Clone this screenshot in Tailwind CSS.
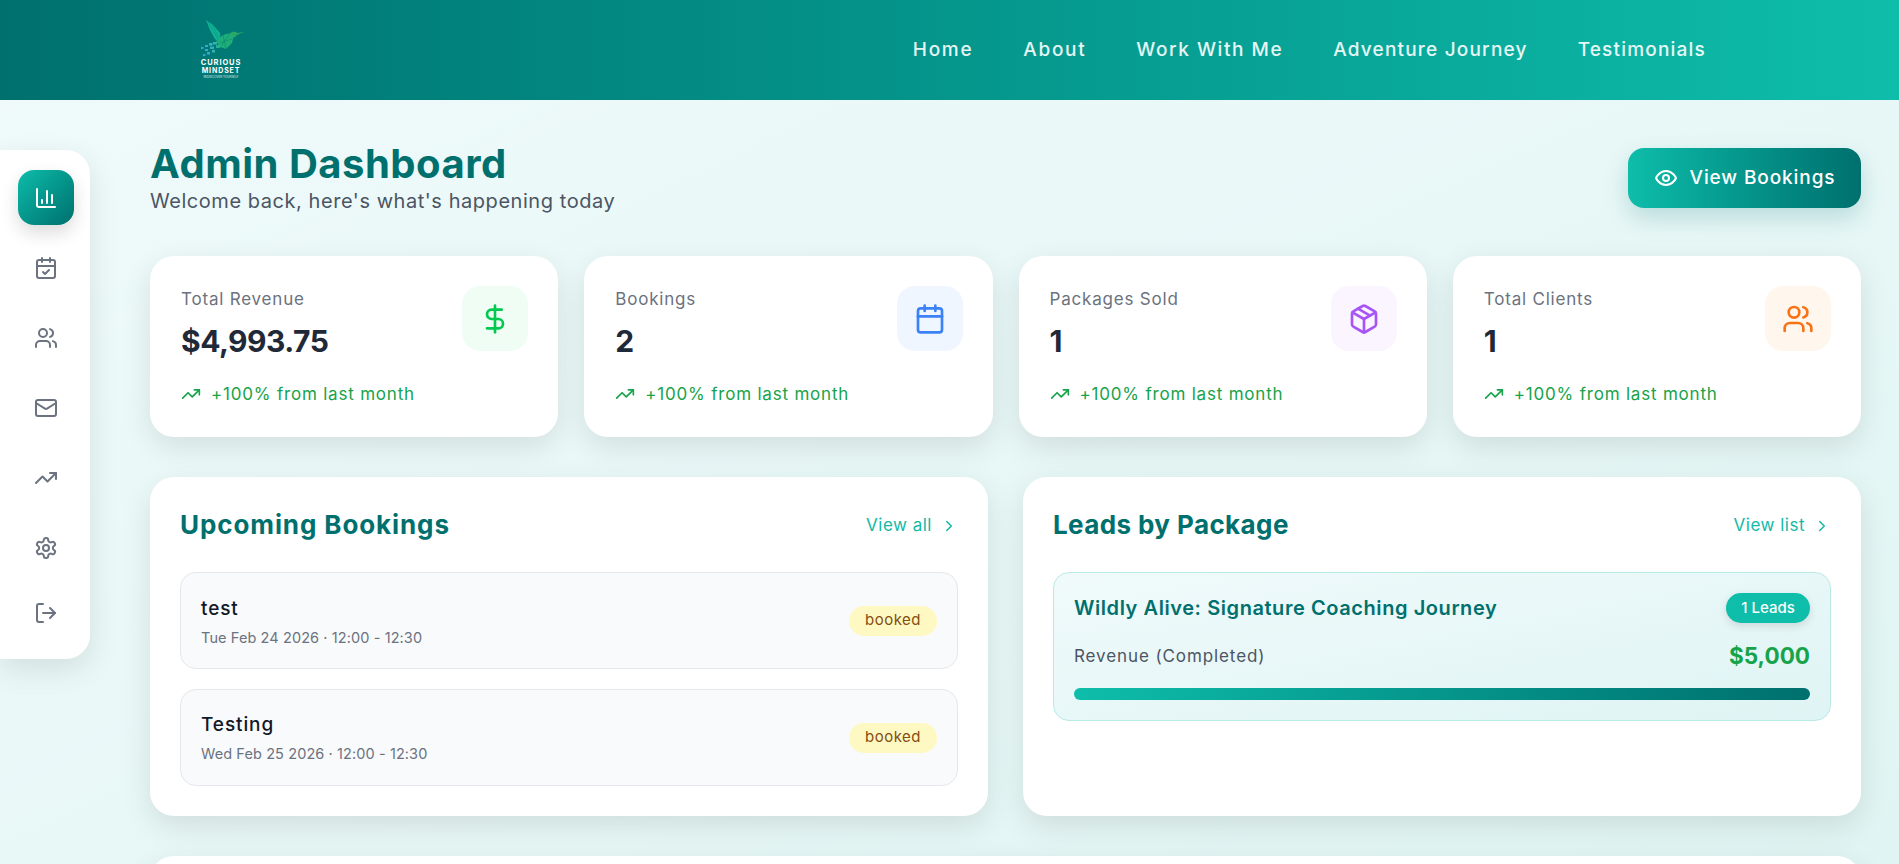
<!DOCTYPE html>
<html lang="en">
<head>
    <meta charset="UTF-8">
    <meta name="viewport" content="width=device-width, initial-scale=1.0">
    <title>Admin Dashboard</title>
    <script src="https://cdn.jsdelivr.net/npm/@tailwindcss/browser@4"></script>
</head>
<body class="h-screen overflow-hidden bg-gradient-to-br from-[#f0fafb] to-[#e0f5f3] font-['Inter',sans-serif] text-[#111827]">
    <header class="h-[100px] flex items-center justify-between pl-[196px] pr-[193px] bg-gradient-to-r from-[#00706e] to-[#0ebdaa]">
        <div class="w-[50px] flex flex-col items-center -mt-[4px]">
            <svg width="50" height="40" viewBox="0 0 50 40">
                <polygon points="10,3 17,8 24,16 25,26 19,22 14,13" fill="#0fb594"/>
                <path d="M12 5 L22 22 M16 8 L24 22" stroke="#0a8f7c" stroke-width="0.5"/>
                <polygon points="20,24 27,18 34,16 38,18 36,26 30,32 24,30" fill="#1fae7a"/>
                <path d="M27 18 L30 32 M34 16 L26 28 M36 22 L24 26" stroke="#0c7f6c" stroke-width="0.5"/>
                <polygon points="34,16 38,14.5 42,16 49,14.5 41,18 38,21" fill="#29a866"/>
                <rect x="17" y="25" width="4" height="2.5" fill="#2fb5a8"/>
                <rect x="13" y="26" width="3.5" height="2.5" fill="#35b3c4"/>
                <rect x="20" y="28" width="4" height="3" fill="#27ae9a"/>
                <rect x="9" y="28" width="3" height="2" fill="#3aa7cf"/>
                <rect x="14" y="29.5" width="4" height="2.5" fill="#33aebf"/>
                <rect x="5" y="30" width="2.5" height="2" fill="#3aa0d0"/>
                <rect x="9" y="32" width="3" height="2" fill="#3aa7cf"/>
                <rect x="16" y="33" width="3" height="2.5" fill="#2fb5b5"/>
                <rect x="11" y="35" width="3" height="2.5" fill="#38a8cc"/>
                <rect x="7" y="37" width="2.5" height="2" fill="#3aa0d0"/>
            </svg>
            <span class="text-[7.5px] leading-[9px] mt-[1px] font-bold text-white tracking-[0.9px]">CURIOUS</span>
            <span class="text-[7px] leading-[8px] font-bold text-white tracking-[0.9px]">MINDSET</span>
            <span class="text-[3px] leading-[4px] text-white/80">REDISCOVER YOURSELF</span>
        </div>
        <nav class="flex items-center gap-[50px] mt-[1px] text-[19px] font-medium text-white/90">
            <a href="#" class="tracking-[1.7px]">Home</a>
            <a href="#" class="tracking-[1.7px]">About</a>
            <a href="#" class="tracking-[1.55px]">Work With Me</a>
            <a href="#" class="tracking-[1.2px]">Adventure Journey</a>
            <a href="#" class="tracking-[1.2px]">Testimonials</a>
        </nav>
    </header>

    <div class="flex items-start">
        <aside class="w-[90px] h-[509px] mt-[50px] shrink-0 bg-white rounded-r-[24px] shadow-[0_10px_30px_rgba(0,0,0,0.1)] pt-[20px] pl-[18px] flex flex-col text-[#6b7280]">
            <a href="#" class="w-[56px] h-[55px] mb-[15px] flex items-center justify-center rounded-[16px] text-white bg-gradient-to-br from-[#0ebdaa] to-[#00706e] shadow-[0_8px_18px_rgba(0,0,0,0.14)]">
                <svg width="24" height="24" viewBox="0 0 24 24" fill="none" stroke="currentColor" stroke-width="2" stroke-linecap="round" stroke-linejoin="round"><path d="M3 3v16a2 2 0 0 0 2 2h16"/><path d="M18 17V9"/><path d="M13 17V5"/><path d="M8 17v-3"/></svg>
            </a>
            <a href="#" class="w-[56px] h-[56px] mb-[14px] flex items-center justify-center">
                <svg width="24" height="24" viewBox="0 0 24 24" fill="none" stroke="currentColor" stroke-width="2" stroke-linecap="round" stroke-linejoin="round"><path d="M8 2v4"/><path d="M16 2v4"/><rect x="3" y="4" width="18" height="18" rx="2"/><path d="M3 10h18"/><path d="m9 16 2 2 4-4"/></svg>
            </a>
            <a href="#" class="w-[56px] h-[56px] mb-[14px] flex items-center justify-center">
                <svg width="24" height="24" viewBox="0 0 24 24" fill="none" stroke="currentColor" stroke-width="2" stroke-linecap="round" stroke-linejoin="round"><path d="M16 21v-2a4 4 0 0 0-4-4H6a4 4 0 0 0-4 4v2"/><circle cx="9" cy="7" r="4"/><path d="M22 21v-2a4 4 0 0 0-3-3.87"/><path d="M16 3.13a4 4 0 0 1 0 7.75"/></svg>
            </a>
            <a href="#" class="w-[56px] h-[56px] mb-[14px] flex items-center justify-center">
                <svg width="24" height="24" viewBox="0 0 24 24" fill="none" stroke="currentColor" stroke-width="2" stroke-linecap="round" stroke-linejoin="round"><rect x="2" y="4" width="20" height="16" rx="2"/><path d="m22 7-8.97 5.7a1.94 1.94 0 0 1-2.06 0L2 7"/></svg>
            </a>
            <a href="#" class="w-[56px] h-[56px] mb-[14px] flex items-center justify-center">
                <svg width="24" height="24" viewBox="0 0 24 24" fill="none" stroke="currentColor" stroke-width="2" stroke-linecap="round" stroke-linejoin="round"><polyline points="22 7 13.5 15.5 8.5 10.5 2 17"/><polyline points="16 7 22 7 22 13"/></svg>
            </a>
            <a href="#" class="w-[56px] h-[56px] mb-[9px] flex items-center justify-center">
                <svg width="24" height="24" viewBox="0 0 24 24" fill="none" stroke="currentColor" stroke-width="2" stroke-linecap="round" stroke-linejoin="round"><path d="M12.22 2h-.44a2 2 0 0 0-2 2v.18a2 2 0 0 1-1 1.73l-.43.25a2 2 0 0 1-2 0l-.15-.08a2 2 0 0 0-2.73.73l-.22.38a2 2 0 0 0 .73 2.73l.15.1a2 2 0 0 1 1 1.72v.51a2 2 0 0 1-1 1.74l-.15.09a2 2 0 0 0-.73 2.73l.22.38a2 2 0 0 0 2.73.73l.15-.08a2 2 0 0 1 2 0l.43.25a2 2 0 0 1 1 1.73V20a2 2 0 0 0 2 2h.44a2 2 0 0 0 2-2v-.18a2 2 0 0 1 1-1.73l.43-.25a2 2 0 0 1 2 0l.15.08a2 2 0 0 0 2.73-.73l.22-.39a2 2 0 0 0-.73-2.73l-.15-.08a2 2 0 0 1-1-1.74v-.5a2 2 0 0 1 1-1.74l.15-.09a2 2 0 0 0 .73-2.73l-.22-.38a2 2 0 0 0-2.73-.73l-.15.08a2 2 0 0 1-2 0l-.43-.25a2 2 0 0 1-1-1.73V4a2 2 0 0 0-2-2z"/><circle cx="12" cy="12" r="3"/></svg>
            </a>
            <a href="#" class="w-[56px] h-[56px] flex items-center justify-center">
                <svg width="24" height="24" viewBox="0 0 24 24" fill="none" stroke="currentColor" stroke-width="2" stroke-linecap="round" stroke-linejoin="round"><path d="M9 21H5a2 2 0 0 1-2-2V5a2 2 0 0 1 2-2h4"/><polyline points="16 17 21 12 16 7"/><line x1="21" y1="12" x2="9" y2="12"/></svg>
            </a>
        </aside>

        <main class="flex-1 min-w-0 pl-[60px] pr-[38px] pt-[40px]">
            <div class="flex items-start justify-between mb-[40px] h-[76px]">
                <div>
                    <h1 class="text-[40px] leading-[48px] font-bold text-[#00706e] tracking-[0.5px]">Admin Dashboard</h1>
                    <p class="text-[20px] leading-[26px] text-[#4b5563] tracking-[0.55px]">Welcome back, here's what's happening today</p>
                </div>
                <button class="w-[233px] h-[60px] mt-[8px] flex items-center justify-center gap-[12px] rounded-[16px] text-white text-[19px] font-medium tracking-[0.9px] bg-gradient-to-r from-[#0ebdaa] to-[#00706e] shadow-[0_10px_24px_rgba(0,112,110,0.2)]">
                    <svg width="24" height="24" viewBox="0 0 24 24" fill="none" stroke="currentColor" stroke-width="2" stroke-linecap="round" stroke-linejoin="round"><path d="M2 12s3-7 10-7 10 7 10 7-3 7-10 7-10-7-10-7Z"/><circle cx="12" cy="12" r="3"/></svg>
                    View Bookings
                </button>
            </div>

            <div class="grid grid-cols-4 gap-[26px] mb-[40px]">
                <div class="h-[181px] bg-white rounded-[24px] pl-[31px] pr-[30px] pt-[30px] shadow-[0_10px_30px_rgba(0,0,0,0.1)]">
                    <div class="flex justify-between">
                        <div>
                            <p class="text-[17px] leading-[24px] mt-[1px] text-[#6b7280] tracking-[0.8px]">Total Revenue</p>
                            <p class="text-[30px] leading-[40px] mt-[10px] font-bold text-[#1f2937] tracking-[-0.5px]">$4,993.75</p>
                        </div>
                        <div class="w-[66px] h-[65px] rounded-[18px] bg-[#f0fdf4] text-[#00c950] flex items-center justify-center">
                            <svg width="32" height="32" viewBox="0 0 24 24" fill="none" stroke="currentColor" stroke-width="2" stroke-linecap="round" stroke-linejoin="round"><line x1="12" y1="2" x2="12" y2="22"/><path d="M17 5H9.5a3.5 3.5 0 0 0 0 7h5a3.5 3.5 0 0 1 0 7H6"/></svg>
                        </div>
                    </div>
                    <div class="flex items-center gap-[10px] mt-[21px] text-[17px] leading-[24px] text-[#16a34a] tracking-[0.8px]">
                        <svg width="20" height="20" viewBox="0 0 24 24" fill="none" stroke="currentColor" stroke-width="2" stroke-linecap="round" stroke-linejoin="round"><polyline points="22 7 13.5 15.5 8.5 10.5 2 17"/><polyline points="16 7 22 7 22 13"/></svg>
                        +100% from last month
                    </div>
                </div>
                <div class="h-[181px] bg-white rounded-[24px] pl-[31px] pr-[30px] pt-[30px] shadow-[0_10px_30px_rgba(0,0,0,0.1)]">
                    <div class="flex justify-between">
                        <div>
                            <p class="text-[17px] leading-[24px] mt-[1px] text-[#6b7280] tracking-[0.8px]">Bookings</p>
                            <p class="text-[30px] leading-[40px] mt-[10px] font-bold text-[#1f2937] tracking-[-0.5px]">2</p>
                        </div>
                        <div class="w-[66px] h-[65px] rounded-[18px] bg-[#eff6ff] text-[#3b82f6] flex items-center justify-center">
                            <svg width="32" height="32" viewBox="0 0 24 24" fill="none" stroke="currentColor" stroke-width="2" stroke-linecap="round" stroke-linejoin="round"><path d="M8 2v4"/><path d="M16 2v4"/><rect x="3" y="4" width="18" height="18" rx="2"/><path d="M3 10h18"/></svg>
                        </div>
                    </div>
                    <div class="flex items-center gap-[10px] mt-[21px] text-[17px] leading-[24px] text-[#16a34a] tracking-[0.8px]">
                        <svg width="20" height="20" viewBox="0 0 24 24" fill="none" stroke="currentColor" stroke-width="2" stroke-linecap="round" stroke-linejoin="round"><polyline points="22 7 13.5 15.5 8.5 10.5 2 17"/><polyline points="16 7 22 7 22 13"/></svg>
                        +100% from last month
                    </div>
                </div>
                <div class="h-[181px] bg-white rounded-[24px] pl-[31px] pr-[30px] pt-[30px] shadow-[0_10px_30px_rgba(0,0,0,0.1)]">
                    <div class="flex justify-between">
                        <div>
                            <p class="text-[17px] leading-[24px] mt-[1px] text-[#6b7280] tracking-[0.8px]">Packages Sold</p>
                            <p class="text-[30px] leading-[40px] mt-[10px] font-bold text-[#1f2937] tracking-[-0.5px]">1</p>
                        </div>
                        <div class="w-[66px] h-[65px] rounded-[18px] bg-[#faf5ff] text-[#a855f7] flex items-center justify-center">
                            <svg width="32" height="32" viewBox="0 0 24 24" fill="none" stroke="currentColor" stroke-width="2" stroke-linecap="round" stroke-linejoin="round"><path d="M11 21.73a2 2 0 0 0 2 0l7-4A2 2 0 0 0 21 16V8a2 2 0 0 0-1-1.73l-7-4a2 2 0 0 0-2 0l-7 4A2 2 0 0 0 3 8v8a2 2 0 0 0 1 1.73z"/><path d="M12 22V12"/><polyline points="3.29 7 12 12 20.71 7"/><path d="m7.5 4.27 9 5.15"/></svg>
                        </div>
                    </div>
                    <div class="flex items-center gap-[10px] mt-[21px] text-[17px] leading-[24px] text-[#16a34a] tracking-[0.8px]">
                        <svg width="20" height="20" viewBox="0 0 24 24" fill="none" stroke="currentColor" stroke-width="2" stroke-linecap="round" stroke-linejoin="round"><polyline points="22 7 13.5 15.5 8.5 10.5 2 17"/><polyline points="16 7 22 7 22 13"/></svg>
                        +100% from last month
                    </div>
                </div>
                <div class="h-[181px] bg-white rounded-[24px] pl-[31px] pr-[30px] pt-[30px] shadow-[0_10px_30px_rgba(0,0,0,0.1)]">
                    <div class="flex justify-between">
                        <div>
                            <p class="text-[17px] leading-[24px] mt-[1px] text-[#6b7280] tracking-[0.8px]">Total Clients</p>
                            <p class="text-[30px] leading-[40px] mt-[10px] font-bold text-[#1f2937] tracking-[-0.5px]">1</p>
                        </div>
                        <div class="w-[66px] h-[65px] rounded-[18px] bg-[#fff7ed] text-[#f97316] flex items-center justify-center">
                            <svg width="32" height="32" viewBox="0 0 24 24" fill="none" stroke="currentColor" stroke-width="2" stroke-linecap="round" stroke-linejoin="round"><path d="M16 21v-2a4 4 0 0 0-4-4H6a4 4 0 0 0-4 4v2"/><circle cx="9" cy="7" r="4"/><path d="M22 21v-2a4 4 0 0 0-3-3.87"/><path d="M16 3.13a4 4 0 0 1 0 7.75"/></svg>
                        </div>
                    </div>
                    <div class="flex items-center gap-[10px] mt-[21px] text-[17px] leading-[24px] text-[#16a34a] tracking-[0.8px]">
                        <svg width="20" height="20" viewBox="0 0 24 24" fill="none" stroke="currentColor" stroke-width="2" stroke-linecap="round" stroke-linejoin="round"><polyline points="22 7 13.5 15.5 8.5 10.5 2 17"/><polyline points="16 7 22 7 22 13"/></svg>
                        +100% from last month
                    </div>
                </div>
            </div>

            <div class="grid grid-cols-2 gap-[35px] mb-[40px]">
                <section class="h-[339px] bg-white rounded-[24px] px-[30px] pt-[30px] shadow-[0_10px_30px_rgba(0,0,0,0.1)]">
                    <div class="flex items-center justify-between h-[36px] mb-[29px]">
                        <h2 class="text-[26px] -mt-[2px] font-bold text-[#00706e] tracking-[0.9px]">Upcoming Bookings</h2>
                        <a href="#" class="flex items-center gap-[8px] mt-[1px] text-[17px] text-[#14b8a6] tracking-[0.5px]">View all
                            <svg width="18" height="18" viewBox="0 0 24 24" fill="none" stroke="currentColor" stroke-width="2" stroke-linecap="round" stroke-linejoin="round"><path d="m9 18 6-6-6-6"/></svg>
                        </a>
                    </div>
                    <div class="flex flex-col gap-[20px]">
                        <div class="h-[97px] flex items-center justify-between px-[20px] rounded-[16px] bg-[#f9fafb] border border-[#e5e7eb]">
                            <div class="pt-[3px]">
                                <p class="text-[19px] leading-[26px] font-medium text-[#111827] tracking-[0.9px]">test</p>
                                <p class="text-[14.5px] leading-[22px] mt-[5px] text-[#6b7280] tracking-[0.1px]">Tue Feb 24 2026 · 12:00 - 12:30</p>
                            </div>
                            <span class="w-[88px] h-[30px] flex items-center justify-center rounded-full bg-[#fef9c3] text-[15px] text-[#854d0e] tracking-[0.5px]">booked</span>
                        </div>
                        <div class="h-[97px] flex items-center justify-between px-[20px] rounded-[16px] bg-[#f9fafb] border border-[#e5e7eb]">
                            <div class="pt-[2px]">
                                <p class="text-[19px] leading-[26px] font-medium text-[#111827] tracking-[0.9px]">Testing</p>
                                <p class="text-[14.5px] leading-[22px] mt-[5px] text-[#6b7280] tracking-[0.1px]">Wed Feb 25 2026 · 12:00 - 12:30</p>
                            </div>
                            <span class="w-[88px] h-[30px] flex items-center justify-center rounded-full bg-[#fef9c3] text-[15px] text-[#854d0e] tracking-[0.5px]">booked</span>
                        </div>
                    </div>
                </section>

                <section class="h-[339px] bg-white rounded-[24px] px-[30px] pt-[30px] shadow-[0_10px_30px_rgba(0,0,0,0.1)]">
                    <div class="flex items-center justify-between h-[36px] mb-[29px]">
                        <h2 class="text-[26px] -mt-[2px] font-bold text-[#00706e] tracking-[0.4px]">Leads by Package</h2>
                        <a href="#" class="flex items-center gap-[8px] mt-[1px] text-[17px] text-[#14b8a6] tracking-[0.5px]">View list
                            <svg width="18" height="18" viewBox="0 0 24 24" fill="none" stroke="currentColor" stroke-width="2" stroke-linecap="round" stroke-linejoin="round"><path d="m9 18 6-6-6-6"/></svg>
                        </a>
                    </div>
                    <div class="h-[149px] px-[20px] pt-[20px] rounded-[16px] border border-[#b9ebe6] bg-gradient-to-br from-[#f0fafb] to-[#dff4f4]">
                        <div class="flex items-center justify-between h-[30px]">
                            <h3 class="text-[20px] font-semibold text-[#00706e] tracking-[0.57px]">Wildly Alive: Signature Coaching Journey</h3>
                            <span class="w-[84px] h-[30px] flex items-center justify-center rounded-full bg-[#0ebdaa] text-white text-[15px] font-medium shadow-[0_3px_8px_rgba(0,0,0,0.12)]">1 Leads</span>
                        </div>
                        <div class="flex items-center justify-between h-[32px] mt-[18px]">
                            <span class="text-[17px] text-[#4b5563] tracking-[0.9px]">Revenue (Completed)</span>
                            <span class="text-[22.5px] -mt-[2px] font-bold text-[#16a34a]">$5,000</span>
                        </div>
                        <div class="h-[12px] mt-[15px] rounded-full bg-gradient-to-r from-[#0ebdaa] to-[#00706e]"></div>
                    </div>
                </section>
            </div>

            <div class="h-[200px] bg-white rounded-[24px] shadow-[0_10px_30px_rgba(0,0,0,0.1)]"></div>
        </main>
    </div>
</body>
</html>
